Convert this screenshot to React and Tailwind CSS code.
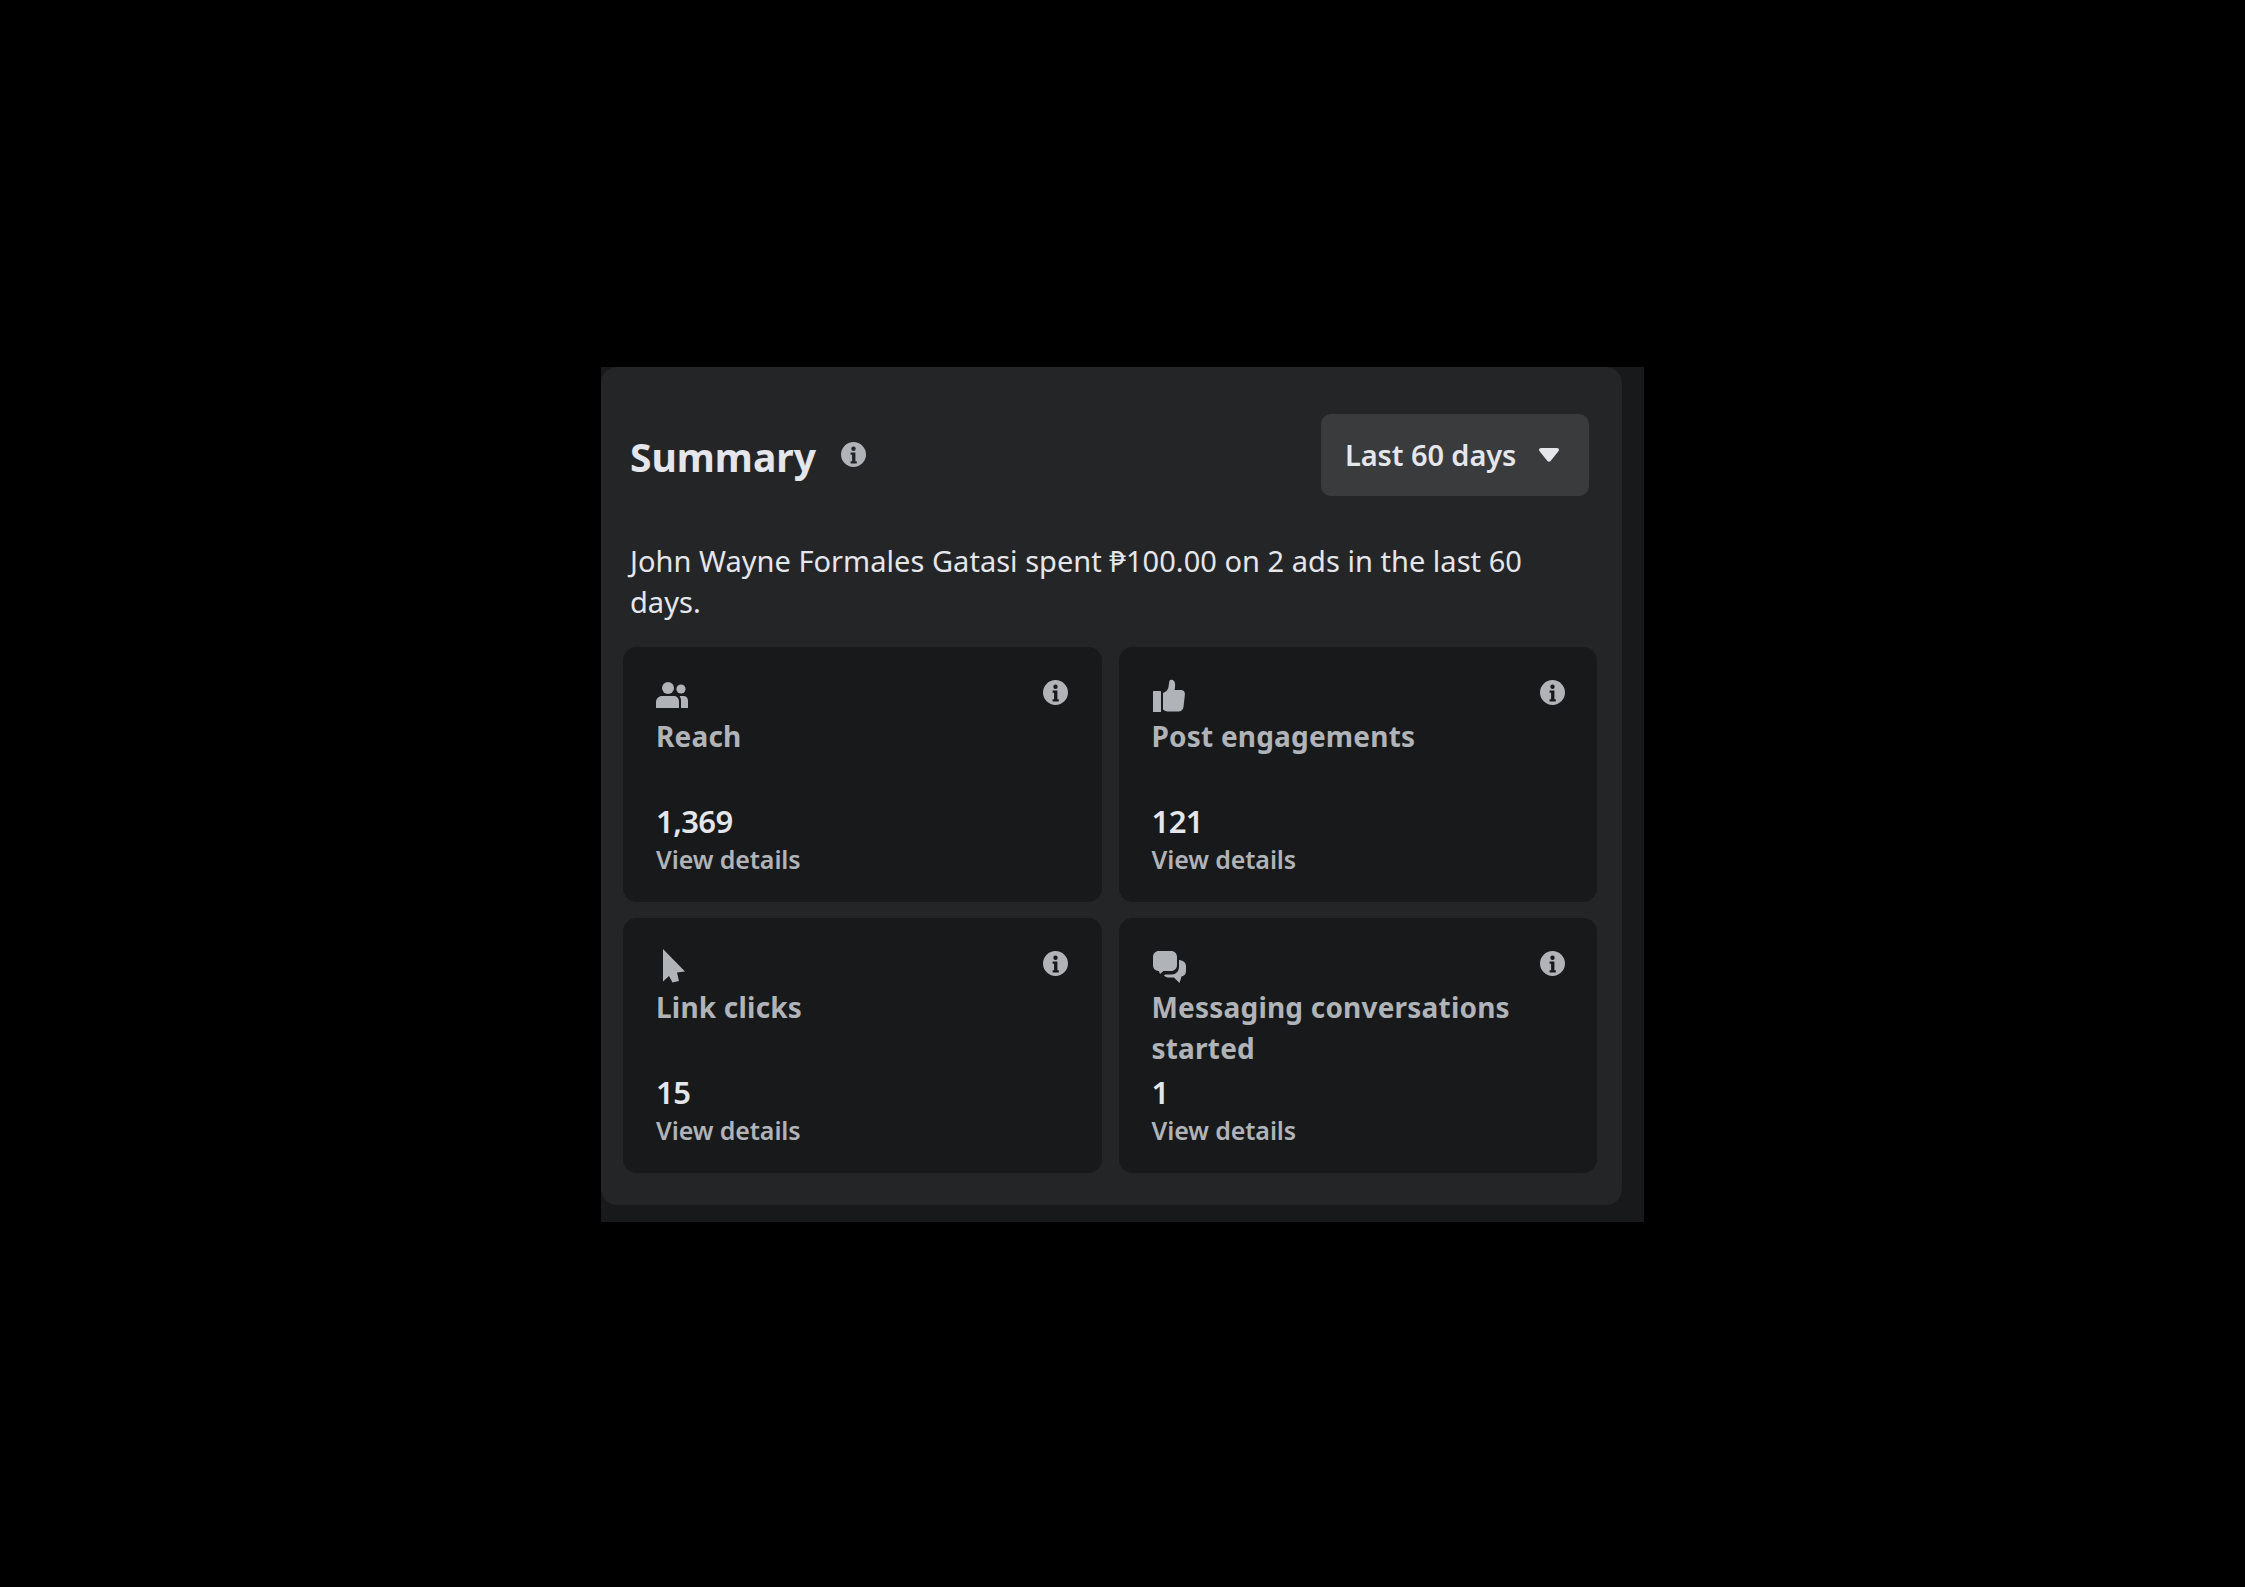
const font = { fontFamily: '"Noto Sans", sans-serif' };

function Info({ className = "" }) {
  return (
    <svg viewBox="0 0 25 25" className={"w-[25px] h-[25px] " + className}>
      <path
        fillRule="evenodd"
        fill="#b0b3b8"
        d="M12.5 0a12.5 12.5 0 1 0 0 25a12.5 12.5 0 0 0 0-25zM12.5 4.6a2.2 2.2 0 1 1 0 4.4a2.2 2.2 0 0 1 0-4.4zM9.6 10.6h4.8v8.6h1.4v2.2H9.6v-2.2h1.5v-6.4H9.6z"
      />
    </svg>
  );
}

function People() {
  return (
    <svg viewBox="0 0 32 26" className="mb-[5px] h-[26px] w-[32px]" fill="#b0b3b8">
      <circle cx="12" cy="6" r="6" />
      <circle cx="25" cy="7" r="4.6" />
      <path d="M0 26v-6c0-3.6 3-6 6-6h12c3 0 5 2.6 5 6v6z" />
      <path d="M25 14h2.5c2.6 0 4.5 2 4.5 4.5V26h-7v-7c0-2-0.4-3.4-1.4-5z" />
    </svg>
  );
}

function Thumb() {
  return (
    <svg viewBox="0 0 34 34" className="h-[34px] w-[34px]" fill="#b0b3b8">
      <rect x="1" y="12" width="8" height="21" rx="0.6" />
      <path d="M11 14c3-1 5-3 5.5-6c0.4-2.4 0.6-4.6 0.9-6c0.4-1.6 3.6-2 5 0.4c1.2 2 0.8 5.6 0.2 8.6h6.4c2.6 0 4.2 2 3.9 4.4l-1.4 12.6c-0.4 3-2.4 4.4-5 4.4H17c-2.6 0-4.4-0.6-6-2z" />
    </svg>
  );
}

function Cursor() {
  return (
    <svg viewBox="0 0 34 36" className="h-[36px] w-[34px]" fill="#b0b3b8">
      <path d="M7 1L29 23.5L21 24.5L23 33L16.5 34.500L13 28L7 33.500Z" />
    </svg>
  );
}

function Chat() {
  return (
    <svg viewBox="0 0 34 33" className="h-[33px] w-[34px]" fill="#b0b3b8">
      <path d="M7 0h12c3.500 0 6 2.500 6 6v8c0 3.500-2.500 6-6 6H11.500L8 23l-1.200-3C3 19.600 1 17.500 1 14V6c0-3.500 2.500-6 6-6z" />
      <path d="M27 9c3.600 0.300 7 2.300 7 6v5c0 3-1.500 5-4.500 5.500L27.500 32l-5.500-5.500H17c-2 0-3.500-0.600-5-2l1-1h6.500c4.500 0 7.500-3.500 7.500-7.500z" />
    </svg>
  );
}

function Card({ icon, label, value, infoClass }) {
  return (
    <div className="relative flex h-[255px] flex-col rounded-[14px] bg-[#18191a] px-[33px] pb-[26px] pt-[32px]">
      <Info className={"absolute top-[33px] " + infoClass} />
      <div className="flex h-[34px] items-end">{icon}</div>
      <div className="mt-[3px] text-[28px] font-bold leading-[41px] tracking-[0.2px] text-[#b0b3b8]">{label}</div>
      <div className="mt-auto text-[31px] font-semibold leading-[43px] tracking-[-0.6px] text-[#e4e6eb]">{value}</div>
      <div className="text-[25px] font-semibold leading-[33px] tracking-[-0.1px] text-[#b0b3b8]">View details</div>
    </div>
  );
}

export default function App() {
  return (
    <div className="flex h-screen w-full items-center justify-center bg-black pt-[2px]" style={font}>
      <div className="h-[855px] w-[1043px] bg-[#18191a]">
        <div className="flex h-[838px] w-[1021px] flex-col rounded-[16px] bg-[#242526] pl-[22px] pr-[25px] pt-[47px]">
          <div className="flex h-[82px] items-center justify-between pl-[7px] pr-[8px]">
            <div className="mt-[3px] flex items-center gap-[25px]">
              <h1 className="text-[39px] font-bold leading-[50px] text-[#e4e6eb]">Summary</h1>
              <Info className="-mt-[4px]" />
            </div>
            <button className="flex h-[82px] w-[268px] items-center gap-[23px] rounded-[10px] bg-[#3a3b3c] pl-[24px] text-[29px] font-semibold tracking-[-0.1px] text-[#e4e6eb]">
              <span>Last 60 days</span>
              <svg viewBox="0 0 20 14" className="h-[14px] w-[20px]" fill="#e4e6eb">
                <path d="M2 0h16c1.800 0 2.600 2 1.400 3.200l-7.600 9.600c-1 1.200-2.600 1.200-3.600 0L0.600 3.200C-0.600 2 0.200 0 2 0z" />
              </svg>
            </button>
          </div>
          <p className="mb-[25px] mt-[44px] pl-[7px] pr-[30px] text-[29px] leading-[41px] tracking-[0.03px] text-[#e4e6eb]">
            John Wayne Formales Gatasi spent ₱100.00 on 2 ads in the last 60 days.
          </p>
          <div className="grid grid-cols-2 gap-x-[17px] gap-y-[16px]">
            <Card icon={<People />} label="Reach" value="1,369" infoClass="right-[34px]" />
            <Card icon={<Thumb />} label="Post engagements" value="121" infoClass="right-[32px]" />
            <Card icon={<Cursor />} label="Link clicks" value="15" infoClass="right-[34px]" />
            <Card icon={<Chat />} label="Messaging conversations started" value="1" infoClass="right-[32px]" />
          </div>
        </div>
      </div>
    </div>
  );
}
